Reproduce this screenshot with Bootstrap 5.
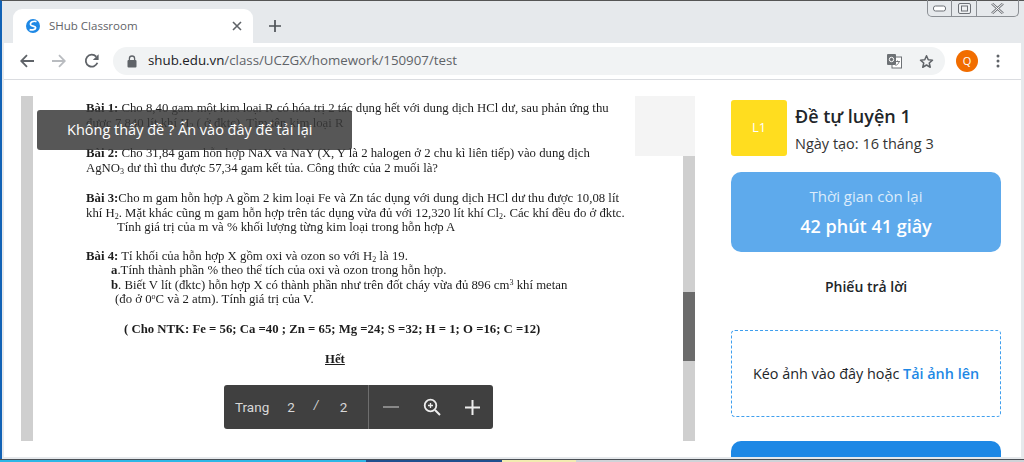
<!DOCTYPE html>
<html lang="vi">

<head>
  <meta charset="utf-8">
  <meta name="viewport" content="width=device-width">
  <title>SHub Classroom</title>
  <link href="https://cdn.jsdelivr.net/npm/bootstrap@5.3.0/dist/css/bootstrap.min.css" rel="stylesheet" type="text/css" />
  <style>
    html, body { height: 462px; overflow: hidden; background: #e6e9ec; font-family: "Open Sans", "Noto Sans", sans-serif; color: #212529; }
    .win { height: 462px; border-top: 1px solid #555; border-left: 2px solid #1262b5; }
    .win-inner { height: 458px; padding-left: 2px; padding-right: 3px; }

    .tabstrip { height: 42px; padding-left: 9px; }
    .chrome-tab { width: 240px; height: 34px; margin-top: 8px; background: #fff; border-radius: 9px 9px 0 0; padding: 0 11px 0 13px; font-size: 11.5px; color: #5f6368; }
    .tab-title { margin-left: 9px; }
    .tab-close { margin-left: auto; }
    .new-tab { height: 34px; margin-left: 15px; margin-top: 8px; }
    .winbtns { height: 17px; width: 92px; margin-left: auto; margin-right: 2px; margin-top: -1px; border: 1px solid #8b8f94; border-top: 0; border-radius: 0 0 5px 5px; }
    .winbtns > div { border-right: 1px solid #8b8f94; width: 25px; height: 100%; }
    .winbtns > div:last-child { border-right: 0; width: 42px; }

    .toolbar { height: 37px; background: #fff; border-bottom: 1px solid #dadce0; padding-left: 16px; padding-right: 12px; }
    .nav-icons { width: 93px; gap: 18px; }
    .omnibox { width: 832px; height: 28px; background: #f1f3f4; border-radius: 14px; padding: 0 11px 0 14px; font-size: 13.3px; color: #5f6368; }
    .host { color: #202124; }
    .url-txt { margin-left: 11px; }
    .star-ico { margin-left: 17px; }
    .avatar { width: 22px; height: 22px; border-radius: 50%; background: #f16d00; color: #fff; font-size: 11px; margin-left: 11px; }
    .dots { margin-left: 18px; }

    .content { height: 377px; background: #fff; overflow: hidden; }
    .doc-pane { width: 674px; height: 345px; margin-top: 16px; margin-left: 17px; flex: none; }
    .strip { width: 12px; flex: none; background: #cfcfcf; }
    .doc-page { flex: 1; padding: 5px 0 0 53px; font-family: "Liberation Serif", "Times New Roman", serif; font-size: 12.77px; line-height: 14.5px; color: #1d1d1d; filter: blur(.4px); white-space: nowrap; overflow: hidden; }
    .doc-page p { margin: 0 0 15px; }
    .doc-page p.gap-wide { margin-bottom: 16px; }
    .doc-page p.gap-tight { margin-bottom: 14px; }
    .doc-page sub, .doc-page sup { font-size: 8px; }
    .ind-a { padding-left: 25px; }
    .ind-b { padding-left: 29px; }
    .ind-c { padding-left: 31px; }
    .ntk { padding-left: 38px; }
    .het { padding-left: 239px; }
    .scroll-top { height: 60px; background: #f4f4f4; flex: none; }
    .scroll-thumb { height: 69px; background: #6b6b6b; margin-top: 136px; }
    .corner { top: 0; right: 0; width: 60px; height: 60px; background: #f4f4f4; }
    .notice { left: 16px; top: 14px; width: 315px; height: 40px; background: rgba(58, 58, 58, .85); color: #fff; border-radius: 3px; font-size: 14.5px; padding-left: 30px; }
    .pager { left: 203px; top: 289px; width: 269px; height: 44px; background: #404040; color: #d8d8d8; border-radius: 3px; font-family: "Roboto", sans-serif; font-size: 13.5px; }
    .pager-left { width: 145px; height: 100%; border-right: 1px solid #6e6e6e; padding-left: 11px; }
    .pg-n { margin-left: 18px; }
    .pg-sl { margin-left: 19px; margin-top: -4px; font-style: italic; font-size: 12px; }
    .pg-t { margin-left: 21px; }
    .pager-right { flex: 1; padding: 0 13px 0 14px; }

    .side { width: 270px; margin-left: 36px; flex: none; padding-top: 20px; }
    .thumb-box { width: 56px; height: 56px; background: #ffdd1f; color: #fff; border-radius: 3px; font-size: 13px; }
    .ex-title { font-size: 18px; font-weight: 600; line-height: 24px; margin-top: 4px; }
    .ex-date { font-size: 14.5px; line-height: 20px; margin-top: 6px; color: #333; }
    .time-box { height: 80px; margin-top: 16px; background: #5eaaec; border-radius: 10px; color: #fff; }
    .time-lbl { font-size: 15px; line-height: 20px; color: #dcecfb; }
    .time-val { font-size: 18px; font-weight: 600; line-height: 26px; margin-top: 7px; }
    .sheet-ttl { font-size: 14px; font-weight: 600; line-height: 20px; margin-top: 25px; }
    .drop-box { height: 87px; margin-top: 33px; border: 1px dashed #3f9fee; border-radius: 4px; font-size: 14.4px; }
    .up-link { color: #1e88e5; font-weight: 600; }
    .submit-bar { height: 30px; margin-top: 24px; background: #1e88e5; border-radius: 10px 10px 0 0; }

    .taskbar { height: 3px; border-top: 1px solid #4a4f55; margin-left: -2px; }
    .tb1 { width: 366px; background: #2cb7e6; }
    .tb2 { width: 136px; background: #1f4f8f; }
    .tb3 { width: 74px; background: #f2ecb0; }
    .tb4 { flex: 1; background: #cfd3d8; }
  </style>
</head>

<body>
  <div class="win">
    <div class="win-inner d-flex flex-column">
      <div class="tabstrip d-flex align-items-start">
        <div class="chrome-tab d-flex align-items-center">
          <svg width="14" height="16" viewBox="0 0 14 16">
            <circle cx="7" cy="8" r="7" fill="#1e88e5" />
            <path d="M10.5 3.6 C7.5 2.6 3.8 4.2 4.6 6.8 C5.2 8.6 9.6 7.8 9.7 9.8 C9.8 11.6 6.4 12.4 3.6 11.6" fill="none" stroke="#fff" stroke-width="1.7" />
          </svg>
          <span class="tab-title">SHub Classroom</span>
          <svg class="tab-close" width="10" height="10" viewBox="0 0 10 10"><path d="M1 1 L9 9 M9 1 L1 9" stroke="#5f6368" stroke-width="1.6" /></svg>
        </div>
        <div class="new-tab d-flex align-items-center">
          <svg width="14" height="14" viewBox="0 0 14 14"><path d="M7 1 V13 M1 7 H13" stroke="#4d5156" stroke-width="1.7" /></svg>
        </div>
        <div class="winbtns d-flex">
          <div class="d-flex align-items-center justify-content-center">
            <svg width="13" height="7" viewBox="0 0 13 7"><rect x=".5" y="1" width="12" height="5" rx="2" fill="#fff" stroke="#6d7177" /></svg>
          </div>
          <div class="d-flex align-items-center justify-content-center">
            <svg width="13" height="11" viewBox="0 0 13 11"><rect x=".5" y=".5" width="12" height="10" rx="1.5" fill="#eef0f2" stroke="#6d7177" /><rect x="3.5" y="3" width="6" height="5" fill="none" stroke="#6d7177" /></svg>
          </div>
          <div class="d-flex align-items-center justify-content-center">
            <svg width="13" height="11" viewBox="0 0 13 11"><path d="M1 .5 L12 10.5 M12 .5 L1 10.5" stroke="#6d7177" stroke-width="2.4" /><path d="M1 .5 L12 10.5 M12 .5 L1 10.5" stroke="#fff" stroke-width="1" /></svg>
          </div>
        </div>
      </div>

      <div class="toolbar d-flex align-items-center">
        <div class="nav-icons d-flex align-items-center">
          <svg width="14" height="14" viewBox="0 0 14 14"><path d="M14 7 H1.5 M7 1.2 L1.2 7 L7 12.8" fill="none" stroke="#5f6368" stroke-width="1.8" /></svg>
          <svg width="14" height="14" viewBox="0 0 14 14"><path d="M0 7 H12.5 M7 1.2 L12.8 7 L7 12.8" fill="none" stroke="#b9bcc0" stroke-width="1.8" /></svg>
          <svg width="16" height="16" viewBox="0 0 16 16"><path d="M13.4 9.8 A6 6 0 1 1 12.2 3.6" fill="none" stroke="#5f6368" stroke-width="1.8" /><path d="M14.6 1.2 V7 H8.8 Z" fill="#5f6368" /></svg>
        </div>
        <div class="omnibox d-flex align-items-center">
          <svg width="10" height="13" viewBox="0 0 10 13"><path d="M2.4 5.5 V3.6 A2.6 2.6 0 0 1 7.6 3.6 V5.5" fill="none" stroke="#5f6368" stroke-width="1.3" /><rect x="0.5" y="5" width="9" height="7.5" rx="1" fill="#5f6368" /></svg>
          <span class="url-txt"><span class="host">shub.edu.vn</span>/class/UCZGX/homework/150907/test</span>
          <svg class="ms-auto" width="15" height="15" viewBox="0 0 15 15">
            <rect x="5" y="3" width="9.5" height="11" fill="#fff" stroke="#6d7175" />
            <rect x="0" y="0" width="9" height="11" rx="1" fill="#6d7175" />
            <circle cx="4.5" cy="5.5" r="2.2" fill="none" stroke="#fff" stroke-width="1" />
            <path d="M8 7.5 H13 M10.5 6.5 V8 M12 8 C11.5 10 10 11 8.5 11.5" fill="none" stroke="#6d7175" stroke-width=".9" />
          </svg>
          <svg class="star-ico" width="15" height="15" viewBox="0 0 24 24"><path d="M12 2.8 L14.8 9.2 L21.6 9.8 L16.4 14.4 L18 21.2 L12 17.6 L6 21.2 L7.6 14.4 L2.4 9.8 L9.2 9.2 Z" fill="none" stroke="#5f6368" stroke-width="2.4" stroke-linejoin="round" /></svg>
        </div>
        <div class="avatar d-flex align-items-center justify-content-center">Q</div>
        <svg class="dots" width="4" height="14" viewBox="0 0 4 14"><circle cx="2" cy="2" r="1.5" fill="#5f6368" /><circle cx="2" cy="7" r="1.5" fill="#5f6368" /><circle cx="2" cy="12" r="1.5" fill="#5f6368" /></svg>
      </div>

      <div class="content d-flex">
        <div class="doc-pane d-flex position-relative">
          <div class="strip"></div>
          <div class="doc-page">
            <p class="gap-wide"><b>Bài 1:</b> Cho 8,40 gam một kim loại R có hóa trị 2 tác dụng hết với dung dịch HCl dư, sau phản ứng thu<br>được 7,840 lít khí H<sub>2</sub> ( ở đktc). Tìm tên kim loại R</p>
            <p class="gap-wide"><b>Bài 2:</b> Cho 31,84 gam hỗn hợp NaX và NaY (X, Y là 2 halogen ở 2 chu kì liên tiếp) vào dung dịch<br>AgNO<sub>3</sub> dư thì thu được 57,34 gam kết tủa. Công thức của 2 muối là?</p>
            <p class="gap-tight"><b>Bài 3:</b>Cho m gam hỗn hợp A gồm 2 kim loại Fe và Zn tác dụng với dung dịch HCl dư thu được 10,08 lít<br>khí H<sub>2</sub>. Mặt khác cũng m gam hỗn hợp trên tác dụng vừa đủ với 12,320 lít khí Cl<sub>2</sub>. Các khí đều đo ở đktc.<br><span class="ind-c">Tính giá trị của m và % khối lượng từng kim loại trong hỗn hợp A</span></p>
            <p><b>Bài 4:</b> Tỉ khối của hỗn hợp X gồm oxi và ozon so với H<sub>2</sub> là 19.<br><span class="ind-a"><b>a</b>.Tính thành phần % theo thể tích của oxi và ozon trong hỗn hợp.</span><br><span class="ind-a"><b>b</b>. Biết V lít (đktc) hỗn hợp X có thành phần như trên đốt cháy vừa đủ 896 cm<sup>3</sup> khí metan</span><br><span class="ind-b">(đo ở 0<sup>o</sup>C và 2 atm). Tính giá trị của V.</span></p>
            <p class="ntk gap-wide"><b>( Cho NTK: Fe = 56; Ca =40 ; Zn = 65; Mg =24; S =32; H = 1; O =16; C =12)</b></p>
            <p class="het"><b><u>Hết</u></b></p>
          </div>
          <div class="strip d-flex flex-column">
            <div class="scroll-top"></div>
            <div class="scroll-thumb"></div>
          </div>
          <div class="corner position-absolute"></div>
          <div class="notice position-absolute d-flex align-items-center">Không thấy đề ? Ấn vào đây để tải lại</div>
          <div class="pager position-absolute d-flex align-items-center">
            <div class="pager-left d-flex align-items-center">
              <span>Trang</span><span class="pg-n">2</span><span class="pg-sl">/</span><span class="pg-t">2</span>
            </div>
            <div class="pager-right d-flex align-items-center justify-content-between">
              <svg width="16" height="4" viewBox="0 0 16 4"><path d="M0 2 H16" stroke="#9a9a9a" stroke-width="1.6" /></svg>
              <svg width="18" height="18" viewBox="0 0 18 18"><circle cx="7.5" cy="7.5" r="5.8" fill="none" stroke="#eee" stroke-width="1.8" /><path d="M12 12 L17 17" stroke="#eee" stroke-width="2" /><path d="M5 7.5 H10 M7.5 5 V10" stroke="#eee" stroke-width="1.3" /></svg>
              <svg width="15" height="15" viewBox="0 0 15 15"><path d="M7.5 0 V15 M0 7.5 H15" stroke="#eee" stroke-width="2" /></svg>
            </div>
          </div>
        </div>

        <div class="side">
          <div class="d-flex gap-2">
            <div class="thumb-box d-flex align-items-center justify-content-center">L1</div>
            <div>
              <div class="ex-title">Đề tự luyện 1</div>
              <div class="ex-date">Ngày tạo: 16 tháng 3</div>
            </div>
          </div>
          <div class="time-box d-flex flex-column align-items-center justify-content-center">
            <div class="time-lbl">Thời gian còn lại</div>
            <div class="time-val">42 phút 41 giây</div>
          </div>
          <div class="sheet-ttl text-center">Phiếu trả lời</div>
          <div class="drop-box d-flex align-items-center justify-content-center">
            <span>Kéo ảnh vào đây hoặc <span class="up-link">Tải ảnh lên</span></span>
          </div>
          <div class="submit-bar"></div>
        </div>
      </div>
    </div>
    <div class="taskbar d-flex">
      <div class="tb1"></div><div class="tb2"></div><div class="tb3"></div><div class="tb4"></div>
    </div>
  </div>
  <script src="https://cdn.jsdelivr.net/npm/bootstrap@5.3.0/dist/js/bootstrap.bundle.min.js"></script>
</body>

</html>
